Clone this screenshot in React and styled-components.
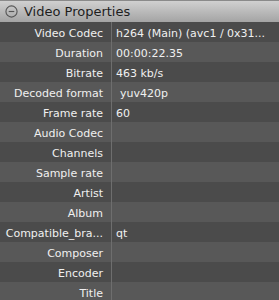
import React from 'react'
import styled, { createGlobalStyle } from 'styled-components'

const Global = createGlobalStyle`
  html, body {
    margin: 0;
    padding: 0;
    background: #4b4b4b;
  }
`

const Panel = styled.div`
  width: 279px;
  height: 300px;
  overflow: hidden;
  font-family: "DejaVu Sans", Verdana, sans-serif;
  background: #4b4b4b;
`

const Header = styled.div`
  display: flex;
  align-items: center;
  gap: 6px;
  height: 21px;
  padding-left: 5px;
  border-top: 1px solid #8a8a8a;
  background: linear-gradient(#d0d0d0, #a4a4a4);
  color: #1e1e1e;
  font-size: 13px;
`

const Icon = styled.svg`
  width: 13px;
  height: 13px;
  fill: none;
  stroke: #555;
  stroke-width: 1.2px;
`

const Row = styled.div`
  display: grid;
  grid-template-columns: 112px 1fr;
  box-sizing: border-box;
  height: 20px;
  background: ${props => (props.odd ? '#585858' : '#4b4b4b')};
  color: #f0f0f0;
  font-size: 11px;
  line-height: 20px;
`

const Label = styled.div`
  text-align: right;
  padding: 2px 8px 0 0;
  white-space: nowrap;
  overflow: hidden;
  border-right: 1px solid #6e6e6e;
`

const Value = styled.div`
  padding: 2px 0 0 ${props => (props.indent ? '8px' : '4px')};
  white-space: nowrap;
  overflow: hidden;
`

const rows = [
  ['Video Codec', 'h264 (Main) (avc1 / 0x31...'],
  ['Duration', '00:00:22.35'],
  ['Bitrate', '463 kb/s'],
  ['Decoded format', 'yuv420p', true],
  ['Frame rate', '60'],
  ['Audio Codec', ''],
  ['Channels', ''],
  ['Sample rate', ''],
  ['Artist', ''],
  ['Album', ''],
  ['Compatible_bra...', 'qt'],
  ['Composer', ''],
  ['Encoder', ''],
  ['Title', ''],
]

export default function App() {
  return (
    <Panel>
      <Global />
      <Header>
        <Icon viewBox="0 0 14 14">
          <circle cx="7" cy="7" r="6" />
          <line x1="4" y1="7" x2="10" y2="7" />
        </Icon>
        Video Properties
      </Header>
      {rows.map(([k, v, indent], i) => (
        <Row key={k} odd={i % 2 === 1}>
          <Label>{k}</Label>
          <Value indent={indent}>{v}</Value>
        </Row>
      ))}
    </Panel>
  )
}
